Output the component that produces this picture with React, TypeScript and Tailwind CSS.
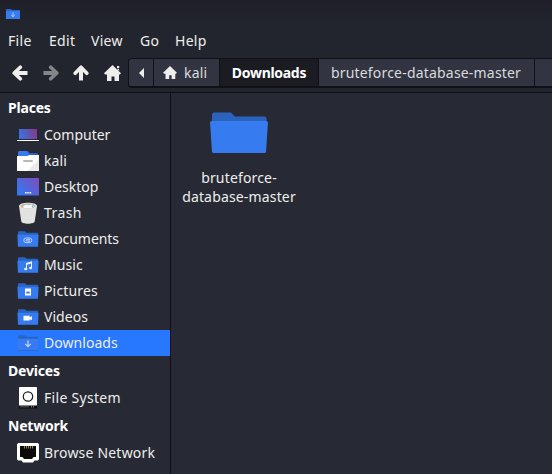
import type { ReactNode } from 'react';

type Kind = 'computer' | 'home' | 'desktop' | 'trash' | 'documents' | 'music' | 'pictures' | 'videos' | 'downloads' | 'disk' | 'network';

const emblems: Partial<Record<Kind, ReactNode>> = {
  documents: (
    <g fill="none" stroke="#c3d7fb" strokeWidth="1">
      <rect x="6.800" y="9" width="8" height="4.600" rx="2.300" />
      <path d="M13 10.700H9.800a.700.700 0 0 0 0 1.400h3.200" />
    </g>
  ),
  music: (
    <g fill="#e9f1ff">
      <path d="M9 8l6-1.700v2L10 9.700v4.500H9zM14 7.500h1v5.800h-1z" />
      <ellipse cx="8.700" cy="14" rx="1.700" ry="1.200" />
      <ellipse cx="13.600" cy="13" rx="1.500" ry="1.200" />
    </g>
  ),
  pictures: (
    <g>
      <path fill="#fff" d="M8 7.500h6v7H8z" />
      <path fill="#3778ea" d="M9.200 12.500v-1.300l1-1 .8.700.8-.9.900 1v1.500z" />
    </g>
  ),
  videos: <path fill="#fff" d="M6.500 8.800h6.200v1.400l2.200-1v4l-2.200-1v1.300H6.500z" />,
  downloads: <path fill="none" stroke="#c8dcff" strokeWidth="1.200" d="M11 7.500v6M8.300 10.900l2.700 2.800 2.700-2.800" />,
};

function PlaceIcon({ kind }: { kind: Kind }) {
  return (
    <svg width="22" height="22" viewBox="0 0 22 22" className="shrink-0">
      <defs>
        <linearGradient id="laptop" x1="0" y1="0.2" x2="1" y2="0">
          <stop stopColor="#3b70df" />
          <stop offset="1" stopColor="#8c3582" />
        </linearGradient>
        <linearGradient id="desk" x1="0" y1="0.8" x2="1" y2="0">
          <stop stopColor="#3478f0" />
          <stop offset="1" stopColor="#7d4dbb" />
        </linearGradient>
      </defs>
      {kind === 'computer' && (
        <>
          <path fill="url(#laptop)" d="M2 5h18v10H2z" />
          <path fill="#fff" d="M0 16h22v1H0z" />
        </>
      )}
      {kind === 'home' && (
        <>
          <path fill="#367bf0" d="M1 6V2l1-1h8.500L12 3v3z" />
          <path fill="#2560c8" d="M11.500 3H20l1 1v1.500h-9.500z" />
          <path fill="#fff" d="M0 6h10.500L12 5h10v16H0z" />
          <path fill="#ebebeb" d="M22 9v12H10.500z" />
          <rect fill="#b9b9b9" x="6" y="10" width="10" height="2" rx="1" />
        </>
      )}
      {kind === 'desktop' && (
        <>
          <rect fill="url(#desk)" y="2" width="22" height="17.500" rx=".6" />
          <path fill="#fff" d="M8 16h1.500v1.400H8zM10.300 16h1.500v1.400h-1.500zM12.600 16h1.500v1.400h-1.500z" />
        </>
      )}
      {kind === 'trash' && (
        <>
          <path fill="#e2e2e0" d="M2 4c0-4.500 18-4.500 18 0l-2.300 15.500c-.6 2.900-12.800 2.900-13.400 0z" />
          <ellipse cx="11" cy="4" rx="7.500" ry="2.500" fill="#b9bab9" />
          <path fill="#fafaf8" d="M5.500 5l3-2.300 4 .5 2.500-.6 1.800 1.800L14 6.200H8z" />
          <path fill="#deb856" d="M4.500 4H6v1.500H4.500z" />
          <path fill="#54bccc" d="M14.800 3.500H16V5h-1.200z" />
        </>
      )}
      {emblems[kind] && (
        <g transform="translate(0 1)">
          <path fill="#2864c4" d="M1 7V3l.7-.7H8l1.500 1.400h11l.5.600V7z" />
          <path fill="#367bf0" d="M.400 5.800h21.200L21 18H1z" />
          <path fill="#2b69d3" d="M1 17h20v1H1z" />
          {emblems[kind]}
        </g>
      )}
      {kind === 'disk' && (
        <>
          <rect x="2" y="0" width="18" height="19" rx=".7" fill="#fff" />
          <circle cx="11" cy="9.500" r="4.700" fill="none" stroke="#1b1b1b" strokeWidth="1.200" />
          <path fill="#0c0c0d" d="M2 18.500h18V21l-.5.500h-17L2 21z" />
          <path fill="#77777b" d="M3 19.500h9v.8H3zM14 19h1v1.500h-1zM16 19h1v1.500h-1z" />
        </>
      )}
      {kind === 'network' && (
        <>
          <path fill="#fff" d="M1.200 1h19.600L22 2.200v15.300l-1.200 1h-3.300L16 20.500H6l-1.500-2H1.200l-1.200-1V2.200z" />
          <path fill="#0c0c0d" d="M3 4h16v11h-2.500L15 17H7l-1.500-2H3z" />
          <path stroke="#a58c4b" strokeWidth=".9" d="M7.500 4v2.500M9.500 4v2.500M11.500 4v2.500M13.500 4v2.500M15.500 4v2.500" />
        </>
      )}
    </svg>
  );
}

const places: [Kind, string, string][] = [
  ['computer', 'Computer', 'tracking-normal'],
  ['home', 'kali', 'tracking-[0.1px]'],
  ['desktop', 'Desktop', 'tracking-normal'],
  ['trash', 'Trash', 'tracking-[0.4px]'],
  ['documents', 'Documents', 'tracking-[-0.05px]'],
  ['music', 'Music', 'tracking-[0.1px]'],
  ['pictures', 'Pictures', 'tracking-[0.15px]'],
  ['videos', 'Videos', 'tracking-[0.05px]'],
  ['downloads', 'Downloads', 'tracking-[0.05px]'],
];

function Row({ kind, label, tracking }: { kind: Kind; label: string; tracking: string }) {
  return (
    <div className={`flex h-[26px] items-center gap-[5px] pl-[17px] ${kind === 'downloads' ? 'bg-[#2777ff]' : ''}`}>
      <PlaceIcon kind={kind} />
      <span className={`whitespace-nowrap pb-[2px] ${tracking}`}>{label}</span>
    </div>
  );
}

function Heading({ children }: { children: ReactNode }) {
  return <div className="flex h-[29px] items-center pl-2 font-bold tracking-[-0.2px] text-white">{children}</div>;
}

function House({ small = false }: { small?: boolean }) {
  return (
    <svg width={small ? 14 : 17} height={small ? 13 : 16} viewBox="0 0 17 16" fill="#eeeeec" className="shrink-0">
      <path d="M8.500 0L17 8.300 15.800 9.500H15V16h-4.500v-4.500h-3V16H3V9.500H1.200L0 8.300z" />
      {!small && <path d="M13 1h2.200v2H13zM14 3.500l1.200 1V6L13 4z" />}
    </svg>
  );
}

function Arrow({ turn, color }: { turn: string; color: string }) {
  return (
    <svg width="16" height="16" viewBox="0 0 16 16" className={turn} fill="none" stroke={color} strokeWidth="4" strokeLinejoin="round">
      <path d="M15.500 8H3" />
      <path strokeLinecap="round" strokeWidth="3.600" d="M8.300 2.200L2.200 8l6.100 5.800" />
    </svg>
  );
}

export default function App() {
  return (
    <div className="flex h-[474px] w-[552px] flex-col overflow-hidden bg-[#272a34] font-['Noto_Sans','Open_Sans',sans-serif] text-[14px] leading-[19px] text-[#eeeeec]">
      <header className="h-[92px] shrink-0 bg-linear-to-b from-[#1e1f28] to-[#23252e] to-[24px]">
        <div className="flex h-[27px] items-center pl-[6px]">
          <svg width="14" height="10" viewBox="0 0 14 10">
            <path fill="#2864c4" d="M0 4V.500L.500 0H5l1 1h7.500l.500.500V4z" />
            <path fill="#367bf0" d="M0 2h14v8H0z" />
            <path fill="none" stroke="#bdd4ff" strokeWidth=".9" d="M7 3.500v4M5.200 6L7 7.700 8.800 6" />
          </svg>
        </div>
        <nav className="flex h-[27px] items-center pl-2 tracking-[0.3px]">
          <span className="w-[41px]">File</span>
          <span className="w-[42px]">Edit</span>
          <span className="w-[49px]">View</span>
          <span className="w-[35px]">Go</span>
          <span>Help</span>
        </nav>
        <div className="flex h-[38px] items-center pl-3">
          <div className="flex w-[116px] items-center gap-[14.500px]">
            <Arrow turn="" color="#eeeeec" />
            <Arrow turn="rotate-180" color="#85868a" />
            <Arrow turn="rotate-90" color="#eeeeec" />
            <House />
          </div>
          <div className="flex h-[30px] flex-1 overflow-hidden rounded-l-[4px] border border-r-0 border-b-2 border-[#101116] bg-[#323541]">
            <div className="flex w-6 shrink-0 items-center justify-center">
              <svg width="5" height="10" viewBox="0 0 5 10"><path fill="#eeeeec" d="M5 0v10L0 5z" /></svg>
            </div>
            <div className="flex w-[66px] shrink-0 items-center gap-[7px] border-l border-[#101116] pl-[9px] tracking-[0.150px] text-[#d9dade]">
              <House small /><span>kali</span>
            </div>
            <div className="flex w-[99px] shrink-0 items-center justify-center border-l border-[#101116] bg-[#1a1c21] font-bold tracking-[-0.3px] text-white">Downloads</div>
            <div className="flex w-[216px] shrink-0 items-center justify-center border-l border-[#101116] pr-px tracking-[0.190px] text-[#d9dade]">bruteforce-database-master</div>
            <div className="flex-1 border-l border-[#101116]" />
          </div>
        </div>
      </header>
      <div className="flex min-h-0 flex-1 border-t border-[#0f1014]">
        <aside className="w-[171px] shrink-0 border-r border-[#101116]">
          <Heading>Places</Heading>
          {places.map(([kind, label, tracking]) => <Row key={kind} kind={kind} label={label} tracking={tracking} />)}
          <Heading>Devices</Heading>
          <Row kind="disk" label="File System" tracking="tracking-[0.3px]" />
          <Heading>Network</Heading>
          <Row kind="network" label="Browse Network" tracking="tracking-[0.2px]" />
        </aside>
        <main className="pt-[19px] pl-[10px]">
          <div className="flex w-[116px] flex-col items-center">
            <svg width="58" height="42" viewBox="0 0 58 42">
              <path fill="#2b63bc" d="M2 10V2L3.500.500H21L25 4.500h30L56.500 6v4z" />
              <path fill="#367bf0" d="M1.500 9h55L58 10l-2 30-1 1H3l-1-1L0 10z" />
            </svg>
            <div className="mt-[14px] text-center tracking-[0.160px]">bruteforce-<br />database-master</div>
          </div>
        </main>
      </div>
    </div>
  );
}
